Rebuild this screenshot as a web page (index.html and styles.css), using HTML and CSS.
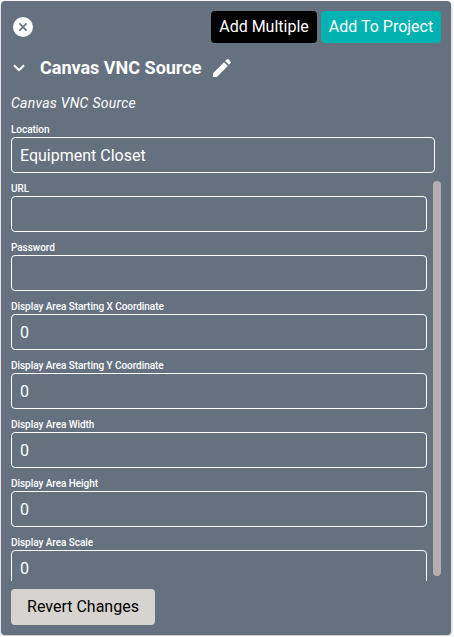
FILE: index.html
```html
<!DOCTYPE html>
<html lang="en">
<head>
<meta charset="utf-8">
<title>Canvas VNC Source</title>
<link rel="stylesheet" href="styles.css">
</head>
<body>
<main class="card">
  <header class="toolbar">
    <svg class="close" viewBox="0 0 20 20"><circle cx="10" cy="10" r="10" fill="#fff"/><path d="M6.4 6.4l7.2 7.2M13.6 6.4l-7.2 7.2" stroke="#66717f" stroke-width="1.6"/></svg>
    <div class="actions">
      <button class="btn btn-dark">Add Multiple</button>
      <button class="btn btn-teal">Add To Project</button>
    </div>
  </header>
  <div class="title-row">
    <svg class="chevron" viewBox="0 0 12 8"><path d="M1 1.2l5 5 5-5" fill="none" stroke="#fff" stroke-width="2"/></svg>
    <h1 class="title">Canvas VNC Source</h1>
    <svg class="pencil" viewBox="3 3 18 18"><path fill="#fff" d="M3 17.25V21h3.75L17.81 9.94l-3.75-3.75L3 17.25zM20.71 7.04a1 1 0 0 0 0-1.41l-2.34-2.34a1 1 0 0 0-1.41 0l-1.83 1.83 3.75 3.75 1.83-1.83z"/></svg>
  </div>
  <p class="subtitle">Canvas VNC Source</p>
  <div class="field location"><span class="label">Location</span><div class="input">Equipment Closet</div></div>
  <div class="scroll">
    <div class="fields">
      <div class="field"><span class="label">URL</span><div class="input"></div></div>
      <div class="field"><span class="label">Password</span><div class="input"></div></div>
      <div class="field"><span class="label">Display Area Starting X Coordinate</span><div class="input">0</div></div>
      <div class="field"><span class="label">Display Area Starting Y Coordinate</span><div class="input">0</div></div>
      <div class="field"><span class="label">Display Area Width</span><div class="input">0</div></div>
      <div class="field"><span class="label">Display Area Height</span><div class="input">0</div></div>
      <div class="field"><span class="label">Display Area Scale</span><div class="input">0</div></div>
    </div>
    <div class="thumb"></div>
  </div>
  <button class="revert">Revert Changes</button>
</main>
</body>
</html>
```
FILE: styles.css
```css
* { box-sizing: border-box; }
html { background: #fff; overflow: hidden; }
body { margin: 0; padding: 1px; font-family: Roboto, "Liberation Sans", sans-serif; font-size: 16px; color: #fff; }
svg { display: block; flex: none; }
button { border: 0; font: inherit; }
.card {
  display: flex;
  flex-direction: column;
  width: 450px;
  height: 634px;
  padding: 10px;
  border-radius: 4px;
  background: #66717f;
  box-shadow: 0 2px 5px rgba(0, 0, 0, .25);
}
.toolbar { display: flex; justify-content: space-between; align-items: center; height: 32px; padding-left: 2px; }
.close { width: 20px; height: 20px; }
.actions { display: flex; gap: 4px; }
.btn { height: 32px; padding: 0; border-radius: 4px; color: #fff; line-height: 32px; }
.btn-dark { width: 106px; background: #000; }
.btn-teal { width: 120px; background: #00b2b2; }
.title-row { display: flex; align-items: center; height: 24px; margin-top: 13px; padding-left: 2px; }
.chevron { width: 12px; height: 8px; }
.title { margin: 0 0 0 15px; font-size: 18px; line-height: 24px; font-weight: 700; white-space: nowrap; width: 173px; }
.pencil { width: 18px; height: 18px; }
.subtitle { margin: 13px 0 0; font-size: 14px; line-height: 20px; font-style: italic; letter-spacing: .25px; }
.field { height: 59px; }
.label { display: block; height: 15px; font-size: 10px; line-height: 15px; font-weight: 500; letter-spacing: -.05px; white-space: nowrap; }
.input { height: 36px; padding: 0 8px; border: 1px solid #fff; border-radius: 4px; line-height: 35px; }
.location { height: 51px; width: 424px; margin-top: 9px; }
.scroll { display: flex; justify-content: space-between; height: 400px; margin-top: 8px; overflow: hidden; }
.fields { width: 416px; }
.thumb { width: 8px; height: 395px; border-radius: 4px; background: #b4aeb1; }
.revert { width: 144px; height: 36px; margin-top: 8px; padding: 0; border-radius: 4px; background: #d7d3d0; color: #000; line-height: 36px; }
```
